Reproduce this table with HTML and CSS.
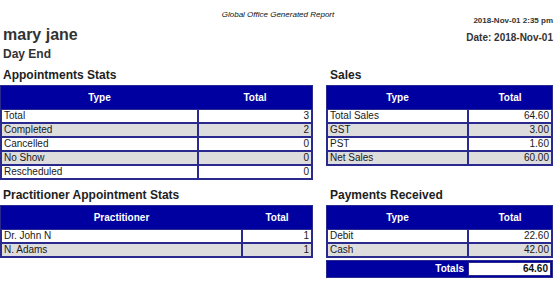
FILE: index.html
```html
<!DOCTYPE html>
<html>
<head>
<meta charset="utf-8">
<title>Day End</title>
<link rel="stylesheet" href="styles.css">
</head>
<body>
<div class="page">
  <div class="topline">
    <span class="spacer"></span>
    <div class="report-title">Global Office Generated Report</div>
    <div class="stamp">2018-Nov-01 2:35 pm</div>
  </div>
  <div class="headrow">
    <div class="who">
      <h1 class="name">mary jane</h1>
      <h2 class="sub">Day End</h2>
    </div>
    <div class="date">Date: 2018-Nov-01</div>
  </div>

  <div class="sections">
    <section class="sec">
      <h3 class="sec-title">Appointments Stats</h3>
      <table class="grid">
        <colgroup><col class="w-appt-type"><col class="w-appt-total"></colgroup>
        <thead><tr><th>Type</th><th>Total</th></tr></thead>
        <tbody>
          <tr><td>Total</td><td class="num">3</td></tr>
          <tr class="alt"><td>Completed</td><td class="num">2</td></tr>
          <tr><td>Cancelled</td><td class="num">0</td></tr>
          <tr class="alt"><td>No Show</td><td class="num">0</td></tr>
          <tr><td>Rescheduled</td><td class="num">0</td></tr>
        </tbody>
      </table>
    </section>

    <section class="sec sec-right">
      <h3 class="sec-title">Sales</h3>
      <table class="grid">
        <colgroup><col class="w-r-type"><col class="w-r-total"></colgroup>
        <thead><tr><th>Type</th><th>Total</th></tr></thead>
        <tbody>
          <tr><td>Total Sales</td><td class="num">64.60</td></tr>
          <tr class="alt"><td>GST</td><td class="num">3.00</td></tr>
          <tr><td>PST</td><td class="num">1.60</td></tr>
          <tr class="alt"><td>Net Sales</td><td class="num">60.00</td></tr>
        </tbody>
      </table>
    </section>

    <section class="sec">
      <h3 class="sec-title">Practitioner Appointment Stats</h3>
      <table class="grid">
        <colgroup><col class="w-prac"><col class="w-prac-total"></colgroup>
        <thead><tr><th>Practitioner</th><th>Total</th></tr></thead>
        <tbody>
          <tr><td>Dr. John N</td><td class="num">1</td></tr>
          <tr class="alt"><td>N. Adams</td><td class="num">1</td></tr>
        </tbody>
      </table>
    </section>

    <section class="sec sec-right">
      <h3 class="sec-title">Payments Received</h3>
      <table class="grid">
        <colgroup><col class="w-r-type"><col class="w-r-total"></colgroup>
        <thead><tr><th>Type</th><th>Total</th></tr></thead>
        <tbody>
          <tr><td>Debit</td><td class="num">22.60</td></tr>
          <tr class="alt"><td>Cash</td><td class="num">42.00</td></tr>
        </tbody>
      </table>
      <table class="totals">
        <colgroup><col class="w-tot-label"><col class="w-tot-value"></colgroup>
        <tr><td class="tot-label">Totals</td><td class="tot-value">64.60</td></tr>
      </table>
    </section>
  </div>
</div>
</body>
</html>
```

FILE: styles.css
```css
html, body {
  margin: 0;
  padding: 0;
  background: #ffffff;
}

body {
  font-family: "Liberation Sans", Arial, sans-serif;
  color: #222222;
}

.page {
  width: 553px;
}

.topline {
  display: grid;
  grid-template-columns: 1fr auto 1fr;
  align-items: start;
  height: 26px;
}

.report-title {
  margin-top: 10px;
  font-size: 8px;
  line-height: 10px;
  font-style: italic;
  color: #111111;
  padding-left: 3px;
}

.stamp {
  margin-top: 16px;
  font-size: 8px;
  line-height: 10px;
  font-weight: bold;
  text-align: right;
  color: #333333;
}

.headrow {
  display: flex;
  justify-content: space-between;
  align-items: flex-start;
}

.name {
  margin: 0;
  padding-left: 3px;
  font-size: 16px;
  line-height: 18px;
  font-weight: bold;
  color: #333333;
}

.sub {
  margin: 3px 0 0;
  padding-left: 3px;
  font-size: 12px;
  line-height: 14px;
  font-weight: bold;
  color: #333333;
}

.date {
  margin-top: 6px;
  font-size: 10px;
  line-height: 12px;
  font-weight: bold;
  color: #333333;
}

.sections {
  margin-top: 7px;
  display: grid;
  grid-template-columns: 313px 227px;
  column-gap: 13px;
  row-gap: 8px;
  align-items: start;
}

.sec-title {
  margin: 0 0 3px;
  padding-left: 3px;
  font-size: 12px;
  line-height: 14px;
  font-weight: bold;
  color: #1e1e1e;
}

.sec-right .sec-title {
  padding-left: 4px;
}

.grid {
  width: 100%;
  table-layout: fixed;
  border-collapse: separate;
  border-spacing: 0;
  border: 1px solid #2a2a8e;
  font-size: 10px;
}

.grid th {
  background: #0000a0;
  color: #ffffff;
  font-weight: bold;
  text-align: center;
  line-height: 21px;
  padding: 0;
  border: 1px solid #0000a0;
}

.grid td {
  line-height: 12px;
  padding: 0 2px;
  border: 1px solid #2a2a8e;
  color: #1a1a1a;
  white-space: nowrap;
  background: #ffffff;
}

.grid tr.alt td {
  background: #dddddd;
}

.grid td.num {
  text-align: right;
}

.w-appt-type { width: 197px; }
.w-appt-total { width: 114px; }
.w-prac { width: 241px; }
.w-prac-total { width: 70px; }
.w-r-type { width: 141px; }
.w-r-total { width: 84px; }
.w-tot-label { width: 139px; }
.w-tot-value { width: 83px; }

.totals {
  margin-top: 2px;
  width: 100%;
  table-layout: fixed;
  border-collapse: separate;
  border-spacing: 1px;
  border: 1px solid #2a2a8e;
  background: #0000a0;
  font-size: 10px;
  font-weight: bold;
}

.totals td {
  line-height: 10px;
  padding: 1px 2px;
  text-align: right;
}

.tot-label {
  color: #ffffff;
  border: 1px solid #0000a0;
}

.tot-value {
  color: #111111;
  background: #ffffff;
  border: 1px solid #2a2a8e;
}
```
